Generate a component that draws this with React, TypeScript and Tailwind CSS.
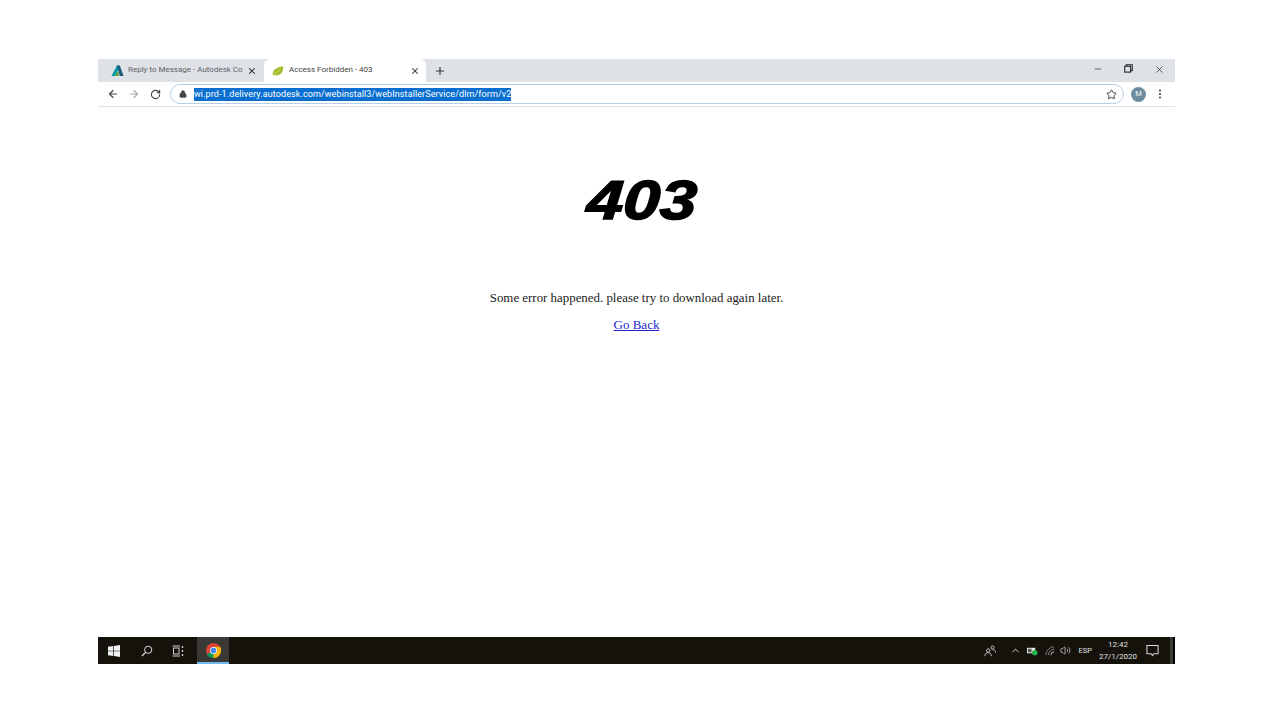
import { ArrowLeft, ArrowRight, RotateCw, Lock, Star, EllipsisVertical, Plus, X, Minus, ChevronUp, Volume2 } from 'lucide-react';

const sans = "font-['Liberation_Sans',Arial,sans-serif]";

function AutodeskIcon() {
  return (
    <svg viewBox="0 0 14 14" className="w-[13px] h-[13px] shrink-0">
      <path d="M0.5 13 L6.5 1.5 L8.5 1.5 L8.5 6 L4 13 Z" fill="#0696a7" />
      <path d="M6.5 1.5 L9.5 1.5 L13.5 13 L9.5 13 Z" fill="#1c5a78" />
      <path d="M4 13 L6.5 9 L8.5 9 L8.5 13 Z" fill="#5aa83c" />
    </svg>
  );
}

function LeafIcon() {
  return (
    <svg viewBox="0 0 14 14" className="w-3 h-3 shrink-0">
      <path d="M1 12 C0 6 5 3 13 1.5 C13.5 9 9 13 4 12 C3 12 2 12 1 12 Z" fill="#a3bd2a" />
      <path d="M2 11 C5 9 7 7 10 5" stroke="#dbe68e" strokeWidth="0.8" fill="none" />
    </svg>
  );
}

function ChromeIcon() {
  return (
    <svg viewBox="0 0 32 32" className="w-[15px] h-[15px]">
      <circle cx="16" cy="16" r="16" fill="#db4437" />
      <path d="M16 16 L2 24 A16 16 0 0 0 16 32 L24 16 Z" fill="#0f9d58" />
      <path d="M16 16 L16 32 A16 16 0 0 0 30 8 L16 8 Z" fill="#f4b400" />
      <circle cx="16" cy="16" r="7.5" fill="#fff" />
      <circle cx="16" cy="16" r="6" fill="#4285f4" />
    </svg>
  );
}

function WindowsIcon() {
  return (
    <svg viewBox="0 0 12 12" className="w-[12px] h-[12px]" fill="#f2f2f2">
      <path d="M0 1.7 L5.3 1 V5.7 H0 Z M6 0.9 L12 0 V5.7 H6 Z M0 6.3 H5.3 V11 L0 10.3 Z M6 6.3 H12 V12 L6 11.1 Z" />
    </svg>
  );
}

function SearchIcon() {
  return (
    <svg viewBox="0 0 12 12" className="w-[12px] h-[12px]" fill="none" stroke="#ddd" strokeWidth="1">
      <circle cx="7.2" cy="4.8" r="3.6" />
      <path d="M4.6 7.4 L1 11" strokeWidth="1.3" />
    </svg>
  );
}

function TaskViewIcon() {
  return (
    <svg viewBox="0 0 12 12" className="w-[12px] h-[12px]" fill="none" stroke="#ccc" strokeWidth="1">
      <path d="M0.5 1 H8 M0.5 11 H8" />
      <rect x="1.5" y="3" width="5.5" height="6" />
      <path d="M10.5 1 V3 M10.5 5 V7 M10.5 9 V11" strokeWidth="1.4" />
    </svg>
  );
}

function PeopleIcon() {
  return (
    <svg viewBox="0 0 14 14" className="w-3 h-3" fill="none" stroke="#d8d8d8" strokeWidth="1">
      <circle cx="5" cy="6.5" r="2" />
      <path d="M1 13 C1 10 3 9 5 9 C7 9 8.5 10 8.5 13" />
      <circle cx="10" cy="3" r="1.8" />
      <path d="M10 5.5 C12 5.5 13.5 6.5 13.5 9" />
    </svg>
  );
}

function BatteryIcon() {
  return (
    <svg viewBox="0 0 12 10" className="w-[11px] h-[10px]">
      <rect x="0" y="1.5" width="9" height="6" fill="#e8e8e8" />
      <rect x="1" y="2.5" width="4" height="4" fill="#555" />
      <circle cx="8.5" cy="7" r="3" fill="#22b14c" />
    </svg>
  );
}

function WifiFadedIcon() {
  return (
    <svg viewBox="0 0 12 12" className="w-[10px] h-[10px]" fill="none" stroke="#8a8a8a" strokeWidth="1">
      <path d="M1 11 A10 10 0 0 1 11 1" />
      <path d="M4 11 A7 7 0 0 1 11 4" />
      <path d="M7 11 A4 4 0 0 1 11 7" stroke="#ddd" />
    </svg>
  );
}

function ActionCenterIcon() {
  return (
    <svg viewBox="0 0 14 14" className="w-[13px] h-[13px]" fill="none" stroke="#d8d8d8" strokeWidth="1.1">
      <path d="M1 1.5 H13 V10.5 H8.5 L7 12.5 L5.5 10.5 H1 Z" />
    </svg>
  );
}

function RestoreIcon() {
  return (
    <svg viewBox="0 0 10 10" className="w-[9px] h-[9px]" fill="none" stroke="#222" strokeWidth="1.2">
      <rect x="0.8" y="2.5" width="6.5" height="6.5" />
      <path d="M2.5 2.5 V0.8 H9.2 V7.5 H7.3" />
    </svg>
  );
}

export default function App() {
  return (
    <div className={`w-[1280px] h-[720px] bg-white pt-[59px] pl-[98px] overflow-hidden ${sans}`}>
      <div className="w-[1077px] h-[605px] flex flex-col">
        {/* Tab strip */}
        <div className="h-[23px] bg-[#dee1e6] flex items-end shrink-0 text-[8px] text-[#5f6368] font-['Roboto',sans-serif]">
          <div className="w-[166px] h-[23px] flex items-center pl-[13px] pr-[7px]">
            <AutodeskIcon />
            <span className="w-[119px] ml-[4px] whitespace-nowrap pb-[1px]">Reply to Message - Autodesk Co</span>
            <X className="w-[10px] h-[10px] ml-[3px] text-[#333]" strokeWidth={2.5} />
          </div>
          <div className="w-[162px] h-[23px] bg-white rounded-t-[6px] flex items-center pl-[8px] pr-[6px]">
            <LeafIcon />
            <span className="flex-1 ml-[5px] whitespace-nowrap text-[#444] pb-[1px]">Access Forbidden - 403</span>
            <X className="w-[10px] h-[10px] text-[#333]" strokeWidth={2.5} />
          </div>
          <div className="h-[23px] flex items-center ml-[8px]">
            <Plus className="w-[12px] h-[12px] text-[#333]" strokeWidth={2.2} />
          </div>
          <div className="ml-auto h-[23px] flex items-start pt-[5px] pr-[10px] gap-[21px]">
            <Minus className="w-[10px] h-[10px] text-[#222]" strokeWidth={1.5} />
            <RestoreIcon />
            <X className="w-[11px] h-[11px] text-[#222]" strokeWidth={1.5} />
          </div>
        </div>

        {/* Toolbar */}
        <div className="h-[25px] border-b border-[#e2e2e2] flex items-center shrink-0 pl-[9px]">
          <ArrowLeft className="w-[12px] h-[12px] text-[#444]" strokeWidth={2.2} />
          <ArrowRight className="w-[12px] h-[12px] ml-[9px] text-[#aaa]" strokeWidth={2.2} />
          <RotateCw className="w-[11px] h-[11px] ml-[10px] text-[#444]" strokeWidth={2.4} />
          <div className="w-[954px] h-[20px] ml-[9px] rounded-full border-[1.5px] border-[#b4cfe8] flex items-center pl-[8px] pr-[6px]">
            <Lock className="w-[8px] h-[8px] text-[#444] fill-[#444] shrink-0" />
            <span className="ml-[7px] bg-[#0a6fd1] text-white text-[9px] leading-[13px] whitespace-nowrap font-['Roboto',sans-serif] tracking-[0.1px]">
              wi.prd-1.delivery.autodesk.com/webinstall3/webInstallerService/dlm/form/v2
            </span>
            <Star className="ml-auto w-[11px] h-[11px] text-[#333]" strokeWidth={2} />
          </div>
          <div className="ml-[7px] w-[15px] h-[15px] rounded-full bg-[#6d8c9f] text-white text-[8px] flex items-center justify-center">
            M
          </div>
          <EllipsisVertical className="ml-[8px] w-[12px] h-[12px] text-[#444]" strokeWidth={2.4} />
        </div>

        {/* Page body */}
        <div className="flex-1 flex flex-col items-center font-['Liberation_Serif','Times_New_Roman',serif] text-[#222]">
          <h1 className={`mt-[62px] ml-[10px] text-[55px] leading-[62px] font-bold italic text-black [-webkit-text-stroke:1.5px_black] scale-x-[1.2] -skew-x-3 ${sans}`}>
            403
          </h1>
          <p className="mt-[59px] text-[12.9px] leading-[16px]">Some error happened. please try to download again later.</p>
          <a href="#" className="mt-[11px] text-[13px] leading-[16px] text-[#2222cc] underline">Go Back</a>
        </div>

        {/* Taskbar */}
        <div className="h-[27px] bg-[#15120c] shrink-0 flex items-center text-white font-['Roboto',sans-serif]">
          <div className="w-[32px] flex justify-center"><WindowsIcon /></div>
          <div className="w-[34px] flex justify-center"><SearchIcon /></div>
          <div className="w-[28px] flex justify-center"><TaskViewIcon /></div>
          <div className="w-[32px] h-[27px] ml-[5px] bg-[#3b3935] border-b-2 border-[#76b9ed] flex items-center justify-center pt-[1px]">
            <ChromeIcon />
          </div>
          <div className="ml-auto flex items-center text-[#e0e0e0] h-full">
            <PeopleIcon />
            <ChevronUp className="ml-[14px] w-[11px] h-[11px]" />
            <div className="ml-[6px]"><BatteryIcon /></div>
            <div className="ml-[7px]"><WifiFadedIcon /></div>
            <Volume2 className="ml-[5px] w-[11px] h-[11px]" strokeWidth={1.5} />
            <span className="ml-[8px] text-[7.5px]">ESP</span>
            <div className="ml-[7px] w-[38px] text-center text-[8px] leading-[12px]">
              <div>12:42</div>
              <div>27/1/2020</div>
            </div>
            <div className="ml-[9px]"><ActionCenterIcon /></div>
            <div className="ml-[11px] w-[3px] h-full bg-[#3a3a38]" />
            <div className="w-[2px] h-full bg-black" />
          </div>
        </div>
      </div>
    </div>
  );
}
